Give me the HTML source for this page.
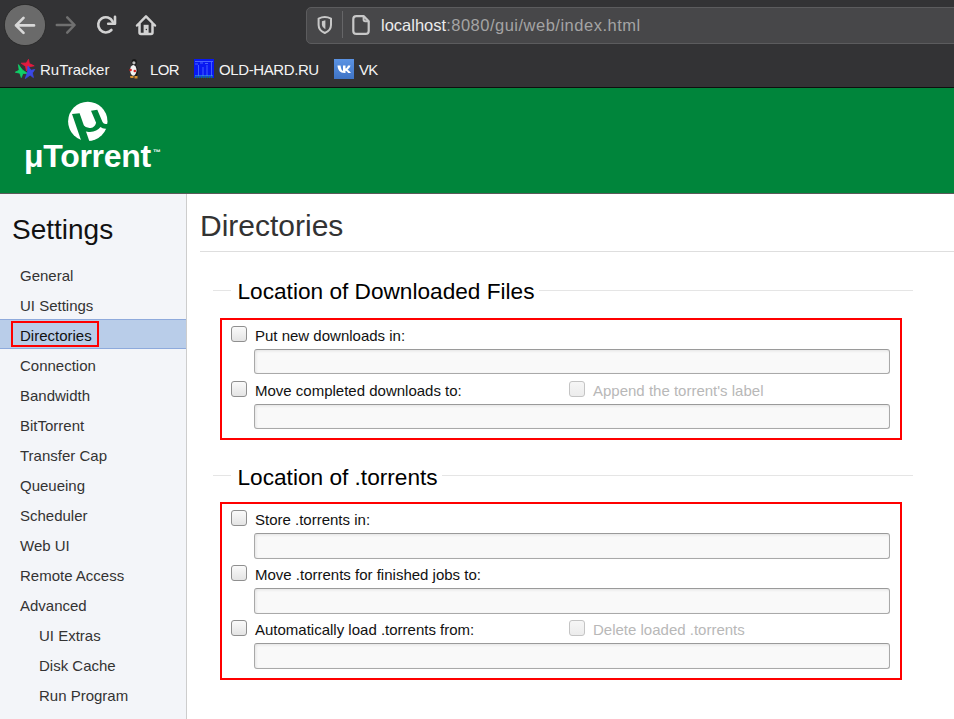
<!DOCTYPE html>
<html><head><meta charset="utf-8">
<style>
*{margin:0;padding:0;box-sizing:border-box}
html,body{width:954px;height:719px;overflow:hidden;background:#fff;font-family:"Liberation Sans",sans-serif}
.abs{position:absolute}
#chrome{position:absolute;left:0;top:0;width:954px;height:88px;background:#333335}
#sep{position:absolute;left:0;top:87px;width:954px;height:1px;background:#0e0e0e}
#url{position:absolute;left:306px;top:7px;width:700px;height:37px;background:#474749;border:1px solid #5c5c5e;border-radius:5px}
.bm{position:absolute;top:60px;color:#f4f4f4;font-size:15px;line-height:20px;white-space:nowrap}
#header{position:absolute;left:0;top:88px;width:954px;height:105px;background:#00853b}
#hline{position:absolute;left:0;top:193px;width:954px;height:1px;background:#5a5a5a}
#side{position:absolute;left:0;top:194px;width:186px;height:525px;background:#f3f5f9}
#sideb{position:absolute;left:186px;top:194px;width:1px;height:525px;background:#cdcdcd}
.si{position:absolute;left:20px;font-size:15px;color:#333;white-space:nowrap;line-height:18px}
.sub{left:39px}
.lg{position:absolute;font-size:22.65px;color:#000;white-space:nowrap;line-height:26px}
.fl{position:absolute;height:1px;background:#e5e5e5}
.rb{position:absolute;border:2px solid #f00}
.cb{position:absolute;width:16px;height:16px;border:1px solid #8f8f8f;border-radius:3px;background:linear-gradient(#fafafa,#e4e4e4)}
.cb.d{border-color:#c4c4c4;background:linear-gradient(#f6f6f6,#ececec)}
.lb{position:absolute;font-size:15px;color:#111;white-space:nowrap;line-height:18px}
.lb.d{color:#b8b8b8}
.in{position:absolute;left:254px;width:636px;height:25px;border:1px solid #a9a9a9;border-top-color:#9a9a9a;border-radius:3px;background:#f9f9f9;box-shadow:inset 1px 1px 3px rgba(0,0,0,.09)}
</style></head><body>
<div id="chrome"></div>
<div id="sep"></div>
<!-- back button -->
<svg class="abs" style="left:0;top:0" width="300" height="50" viewBox="0 0 300 50">
  <circle cx="25" cy="25" r="20.6" fill="#6a6a6a" stroke="#262626" stroke-width="0.8"/>
  <g fill="none" stroke="#d8d8d8" stroke-width="2.7" stroke-linecap="round" stroke-linejoin="round" transform="translate(0 0.4)">
    <path d="M16 25 H34 M23.5 17.5 L16 25 L23.5 32.5"/>
  </g>
  <g fill="none" stroke="#707070" stroke-width="2.5" stroke-linecap="round" stroke-linejoin="round">
    <path d="M56.8 25 H74 M67.2 17.3 L74.6 25 L67.2 32.7"/>
  </g>
  <g fill="none" stroke="#d2d2d2" stroke-width="2.6" stroke-linecap="round" stroke-linejoin="round">
    <path d="M113.6 23.2 L112.7 21.6 A7.6 7.6 0 1 0 111.4 30"/>
    <path d="M115 16.8 V23.8 H108.2"/>
  </g>
  <g fill="none" stroke="#d2d2d2" stroke-width="2.5" stroke-linecap="round" stroke-linejoin="round">
    <path d="M137 25.5 L146 16.3 L155 25.5 M139.5 23 V32.5 Q139.5 34 141 34 H151 Q152.5 34 152.5 32.5 V23"/>
    
  </g>
  <rect x="143.6" y="24.8" width="5" height="9.5" fill="#d2d2d2"/><circle cx="146.4" cy="29.4" r="0.75" fill="#333"/>
</svg>
<div id="url"></div>
<svg class="abs" style="left:300px;top:0" width="90" height="50" viewBox="300 0 90 50">
  <path d="M318.6 18.6 Q324.8 15.6 331 18.6 V25 C331 29 328.5 31.5 324.8 33 C321.1 31.5 318.6 29 318.6 25 Z" fill="none" stroke="#c8c8c8" stroke-width="2" stroke-linejoin="round"/>
  <path d="M321.9 21.3 L325.4 20.2 V29.2 Q321.9 27.2 321.9 24.6 Z" fill="#c8c8c8"/>
  <rect x="342" y="11" width="1" height="27" fill="#666668"/>
  <path d="M356.3 16.1 H363.6 L368.7 21.2 V30.9 Q368.7 33.9 365.7 33.9 H356.3 Q353.3 33.9 353.3 30.9 V19.1 Q353.3 16.1 356.3 16.1 Z" fill="none" stroke="#c8c8c8" stroke-width="2.2" stroke-linejoin="round"/>
  <path d="M363.6 16.1 V19.6 Q363.6 21.2 365.2 21.2 H368.7" fill="none" stroke="#c8c8c8" stroke-width="2" stroke-linejoin="round"/>
</svg>
<div class="abs" style="left:381px;top:15px;font-size:16.5px;line-height:20px;white-space:nowrap;letter-spacing:0px;color:#ececec">localhost<span style="color:#a4a4a4;letter-spacing:0.5px">:8080/gui/web/index.html</span></div>

<!-- bookmarks -->
<svg class="abs" style="left:10px;top:55px" width="30" height="28" viewBox="0 0 30 28">
  <path d="M11.2 8.2 L16.3 8.0 L18.5 4.3 L19.4 8.6 L24.2 10.8 L18.9 11.9 L16.5 15.9 L15.5 11.3Z" fill="#e21a3f" stroke="#e21a3f" stroke-width="0.8" stroke-linejoin="round"/>
  <path d="M8.4 9.6 L12.4 15.0 L17.5 18.4 L12.9 18.4 L11.3 22.6 L9.9 18.2 L5.3 17.2 L9.2 15.2Z" fill="#0fd068" stroke="#0fd068" stroke-width="0.8" stroke-linejoin="round"/>
  <path d="M18.0 11.0 L21.0 15.3 L24.7 14.5 L22.4 18.0 L23.4 22.6 L20.1 20.1 L15.3 23.6 L17.5 17.0Z" fill="#3a48e6" stroke="#3a48e6" stroke-width="0.8" stroke-linejoin="round"/>
</svg>
<div class="bm" style="left:40px">RuTracker</div>
<svg class="abs" style="left:128px;top:58px" width="12" height="21" viewBox="0 0 12 21">
  <ellipse cx="6.2" cy="4.2" rx="2.6" ry="3.2" fill="#1a1a1a"/>
  <ellipse cx="5.9" cy="4.8" rx="1.6" ry="1.6" fill="#bdbdbd"/>
  <path d="M6.5 7 C10 8 10.5 14 9 18 L7 18 Z" fill="#1a1a1a"/>
  <ellipse cx="5.3" cy="12.3" rx="3.2" ry="5.4" fill="#f2f2f2"/>
  <circle cx="2.6" cy="12" r="1.3" fill="#d42020"/>
  <circle cx="6.8" cy="13" r="1.3" fill="#d42020"/>
  <path d="M2 18 H5.5 V20 H2.5 Z M6.5 18 H9.5 L9.5 20.5 H6.5 Z" fill="#d89030"/>
</svg>
<div class="bm" style="left:150px;letter-spacing:-0.6px">LOR</div>
<svg class="abs" style="left:194px;top:59px" width="20" height="19" viewBox="0 0 20 19">
  <rect width="20" height="19" fill="#0818f2"/>
  <path d="M1 2.5 H19 M1 5 H4 M6 4 H9 M11 4.5 H14" stroke="#5a78ff" stroke-width="0.8"/>
  <path d="M4.5 6 V17 M9 8 V17 M13 6 V17 M17.5 3 V17" stroke="#4a66ff" stroke-width="0.9"/>
  <path d="M1 16.8 H19" stroke="#38a8e0" stroke-width="0.8"/>
  <path d="M1 18.2 H19" stroke="#1a8a50" stroke-width="1.4" stroke-dasharray="1.2 0.8"/>
</svg>
<div class="bm" style="left:219px;letter-spacing:-0.4px">OLD-HARD.RU</div>
<svg class="abs" style="left:334px;top:59px" width="20" height="20" viewBox="0 0 20 20">
  <defs><linearGradient id="vkg" x1="0" y1="0" x2="0" y2="1"><stop offset="0" stop-color="#5b93e4"/><stop offset="1" stop-color="#3f74c6"/></linearGradient></defs><rect width="20" height="20" fill="url(#vkg)"/>
  <path d="M3.5 6.5 H6.5 C7 10 8 11.5 9 12 V6.5 H11.5 V9.5 C12.5 9.5 13.5 8 14 6.5 H16.5 C16 8.5 14.5 10 13.5 10.7 C14.5 11.2 16 12.5 17 14 H14.2 C13.5 12.8 12.5 11.8 11.5 11.7 V14 H10.5 C6 14 3.7 11 3.5 6.5 Z" fill="#fff"/>
</svg>
<div class="bm" style="left:359px;letter-spacing:-0.8px">VK</div>

<!-- header -->
<div id="header"></div>
<div id="hline"></div>
<svg class="abs" style="left:62px;top:98px" width="50" height="48" viewBox="0 0 50 48">
  <defs><mask id="mm"><circle cx="25.8" cy="23.4" r="19.7" fill="#fff"/><path d="M10 16 L17.6 15.2 L28 45 L20 45 Z" fill="#000"/><path d="M29 12.8 L35.3 11.8 L40.5 24 Q42 27 46 25.5 L46 30.5 Q41 31.5 38.5 29 Q35 33.5 28 34 Q24 34.5 21.5 32 L21.3 27 Q24.3 30.6 28.7 30 Q33 29.4 34.1 24.8 Z" fill="#000"/></mask></defs>
  <rect width="50" height="48" fill="#fff" mask="url(#mm)"/>
</svg>
<div class="abs" style="left:24px;top:138px;color:#fff;font-size:32px;font-weight:bold;line-height:36px;letter-spacing:-0.3px;white-space:nowrap">μTorrent</div>
<div class="abs" style="left:153px;top:149px;color:#fff;font-size:8px;font-weight:bold;line-height:8px">™</div>

<!-- sidebar -->
<div id="side"></div>
<div id="sideb"></div>
<div class="abs" style="left:12px;top:214px;font-size:28px;line-height:32px;color:#111;white-space:nowrap">Settings</div>
<div class="abs" style="left:0;top:319px;width:186px;height:30px;background:#b9cde9;border-top:1px solid #8eaadc;border-bottom:1px solid #8eaadc"></div>
<div class="abs" style="left:11px;top:321px;width:88px;height:26px;border:2px solid #f00"></div>
<div class="si" style="top:267px">General</div>
<div class="si" style="top:297px">UI Settings</div>
<div class="si" style="top:327px;color:#111">Directories</div>
<div class="si" style="top:357px">Connection</div>
<div class="si" style="top:387px">Bandwidth</div>
<div class="si" style="top:417px">BitTorrent</div>
<div class="si" style="top:447px">Transfer Cap</div>
<div class="si" style="top:477px">Queueing</div>
<div class="si" style="top:507px">Scheduler</div>
<div class="si" style="top:537px">Web UI</div>
<div class="si" style="top:567px">Remote Access</div>
<div class="si" style="top:597px">Advanced</div>
<div class="si sub" style="top:627px">UI Extras</div>
<div class="si sub" style="top:657px">Disk Cache</div>
<div class="si sub" style="top:687px">Run Program</div>

<!-- content -->
<div class="abs" style="left:200px;top:209px;font-size:30px;line-height:34px;color:#333;white-space:nowrap">Directories</div>
<div class="abs" style="left:200px;top:251px;width:754px;height:1px;background:#dedede"></div>

<div class="fl" style="left:213px;top:290px;width:18px"></div>
<div class="fl" style="left:539px;top:290px;width:374px"></div>
<div class="lg" style="left:237.5px;top:278px">Location of Downloaded Files</div>
<div class="rb" style="left:220px;top:318px;width:682px;height:122px"></div>
<div class="cb" style="left:231px;top:326px"></div>
<div class="lb" style="left:255px;top:327px">Put new downloads in:</div>
<div class="in" style="top:349px"></div>
<div class="cb" style="left:231px;top:381px"></div>
<div class="lb" style="left:255px;top:382px">Move completed downloads to:</div>
<div class="cb d" style="left:569px;top:381px"></div>
<div class="lb d" style="left:593px;top:382px">Append the torrent's label</div>
<div class="in" style="top:404px"></div>

<div class="fl" style="left:213px;top:475px;width:18px"></div>
<div class="fl" style="left:442px;top:475px;width:471px"></div>
<div class="lg" style="left:237.5px;top:463.5px">Location of .torrents</div>
<div class="rb" style="left:220px;top:502px;width:682px;height:178px"></div>
<div class="cb" style="left:231px;top:510px"></div>
<div class="lb" style="left:255px;top:511px">Store .torrents in:</div>
<div class="in" style="top:533px;height:26px"></div>
<div class="cb" style="left:231px;top:565px"></div>
<div class="lb" style="left:255px;top:566px">Move .torrents for finished jobs to:</div>
<div class="in" style="top:588px;height:26px"></div>
<div class="cb" style="left:231px;top:620px"></div>
<div class="lb" style="left:255px;top:621px">Automatically load .torrents from:</div>
<div class="cb d" style="left:569px;top:620px"></div>
<div class="lb d" style="left:593px;top:621px">Delete loaded .torrents</div>
<div class="in" style="top:643px;height:26px"></div>
</body></html>
